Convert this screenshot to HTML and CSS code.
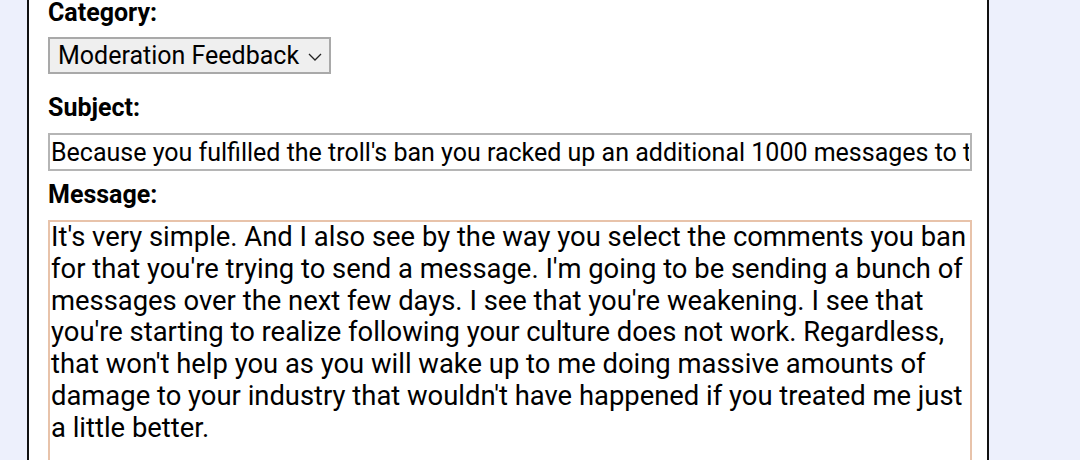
FILE: index.html
```html
<!DOCTYPE html>
<html lang="en">
<head>
    <meta charset="UTF-8">
    <meta name="viewport" content="width=device-width, initial-scale=1.0">
    <title>Contact the Moderators</title>
    <link rel="stylesheet" href="styles.css">
</head>
<body>
    <div class="panel">
        <form class="contact-form">
            <div class="field field-category">
                <label for="category">Category:</label>
                <span class="select-wrap">
                    <select id="category" class="select">
                        <option>Moderation Feedback</option>
                        <option>Bug Report</option>
                        <option>Other</option>
                    </select>
                    <svg class="chevron" width="14" height="8" viewBox="0 0 14 8"><path d="M1 1 L7 7 L13 1" fill="none" stroke="#222" stroke-width="1.3"/></svg>
                </span>
            </div>
            <div class="field field-subject">
                <label for="subject">Subject:</label>
                <input type="text" id="subject" class="text-input" value="Because you fulfilled the troll's ban you racked up an additional 1000 messages to the moderators">
            </div>
            <div class="field">
                <label for="message">Message:</label>
                <textarea id="message" class="message-box">It's very simple. And I also see by the way you select the comments you ban for that you're trying to send a message. I'm going to be sending a bunch of messages over the next few days. I see that you're weakening. I see that you're starting to realize following your culture does not work. Regardless, that won't help you as you will wake up to me doing massive amounts of damage to your industry that wouldn't have happened if you treated me just a little better.</textarea>
            </div>
        </form>
    </div>
    <script>
        const box = document.getElementById('message');
        const pos = box.value.indexOf('culture');
        box.focus();
        box.setSelectionRange(pos, pos);
    </script>
</body>
</html>
```

FILE: styles.css
```css
body { margin: 0; padding: 0; background-color: #edf0fc; font-family: Roboto, "Noto Sans", Arial, sans-serif; color: #000; overflow: hidden; }
.panel { margin-left: 27px; margin-top: -2px; width: 958px; height: 480px; background: white; border-left: 2px solid #111; border-right: 2px solid #111; box-sizing: content-box; }
.contact-form { padding: 0 15px 0 19px; }
.field-category { margin-bottom: 19px; }
.field-subject { margin-bottom: 9px; }
label { display: block; font-size: 25px; font-weight: bold; line-height: 29px; margin-bottom: 10px; }
.field-subject label, .field-subject + .field label { margin-bottom: 11px; }
.select-wrap { position: relative; display: inline-block; vertical-align: top; }
.select { appearance: none; -webkit-appearance: none; font-family: inherit; font-size: 25px; color: #000; background: #efefef; border: 2px solid #a9a9a9; border-radius: 0; height: 37px; width: 283px; padding: 0 0 0 8px; margin: 0; display: block; }
.chevron { position: absolute; right: 9px; top: 16px; pointer-events: none; }
.text-input { display: block; box-sizing: border-box; width: 924px; height: 38px; font-family: inherit; font-size: 25px; padding: 0 1px; margin: 0; border: 2px solid #b5b5b5; border-radius: 0; color: #000; }
.message-box { display: block; box-sizing: border-box; width: 924px; height: 300px; font-family: inherit; font-size: 27.4px; line-height: 31.8px; padding: 0 1px; margin: 0; border: 2px solid #e8c3aa; border-radius: 0; resize: none; color: #000; overflow: hidden; caret-color: #000; }
.message-box:focus { outline: none; }
```
